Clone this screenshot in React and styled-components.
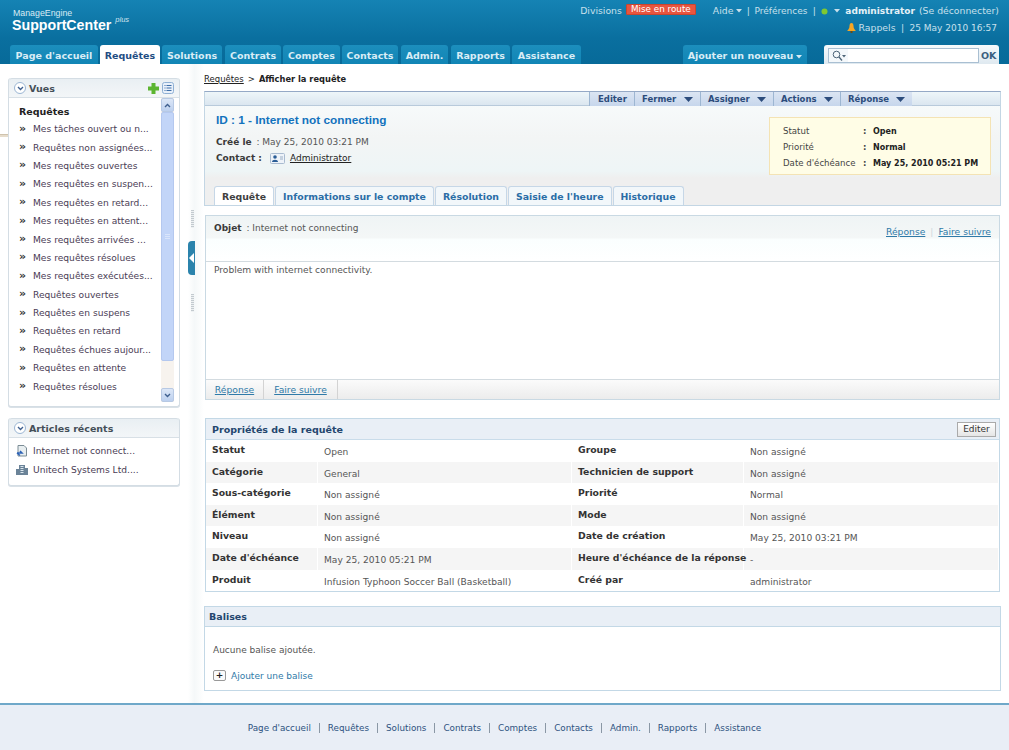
import React from 'react';
import styled, { createGlobalStyle } from 'styled-components';

const Global = createGlobalStyle`
  html, body { margin: 0; padding: 0; background: #fff; }
  body { font-family: "DejaVu Sans", Verdana, sans-serif; font-size: 9px; color: #333; }
  * { box-sizing: border-box; }
`;
const Page = styled.div`width: 1009px; height: 750px; overflow: hidden; display: flex; flex-direction: column; background: #fff;`;
const Header = styled.header`height: 64px; flex: none; background: linear-gradient(#1583b4, #0a6f9f 60%, #076a99); display: flex; flex-direction: column; position: relative;`;
const HeaderTop = styled.div`height: 45px; display: flex; justify-content: space-between; padding: 0 10px 0 12px;`;
const Logo = styled.div`color: #fff; padding-top: 8px; font-family: "Liberation Sans", Arial, sans-serif;`;
const LogoSmall = styled.div`font-size: 8.8px; line-height: 10px; color: #d8ebf4; padding-left: 1px;`;
const LogoBig = styled.div`font-size: 14.2px; line-height: 15px; font-weight: 700; display: flex; gap: 4px;`;
const LogoPlus = styled.span`font-size: 7.5px; font-style: italic; font-weight: 400; line-height: 8px; color: #cfe4ee; margin-top: -2px;`;
const HeaderRight = styled.div`display: flex; flex-direction: column; align-items: flex-end; color: #c8e0ec; font-size: 9.3px; padding-top: 5px; gap: 6px;`;
const HeaderLine = styled.div`display: flex; align-items: center; height: 11px; white-space: nowrap; padding-right: ${p => p.$pr ?? 0}px;`;
const Gap = styled.span`display: inline-block; flex: none; width: ${p => p.$w}px; text-align: center;`;
const Pref = styled.span`font-size: 9px;`;
const DateText = styled.span`font-size: 9px;`;
const Badge = styled.span`background: #e8553f; color: #fff; border: 1px solid #c9452f; font-size: 8.8px; line-height: 9px; height: 11px; width: 70px; text-align: center; margin: -3px 17px 0 4px; border-radius: 1px;`;
const Admin = styled.b`color: #e4f1f7; font-size: 9px; margin-right: 4px;`;
const NavRow = styled.div`height: 19px; display: flex; align-items: flex-end; padding-left: 10px;`;
const NavTab = styled.div`height: 19px; flex: none; width: ${p => p.$w}px; margin-right: ${p => p.$m}px; margin-left: ${p => p.$ml ?? 0}px; border-radius: 3px 3px 0 0; font-size: 9.5px; font-weight: 700; line-height: 21px; text-align: center; white-space: nowrap;
  background: ${p => p.$active ? '#fff' : 'linear-gradient(#1c8ebd, #1185b5)'};
  color: ${p => p.$active ? '#1f4d83' : '#d9edf6'};`;
const SearchBox = styled.div`width: 175px; height: 19px; margin-left: 17px; background: linear-gradient(#f6fafc, #dfe9f0); border-radius: 3px 3px 0 0; display: flex; align-items: center; padding: 2px 2px 0 4px;`;
const SearchIcon = styled.div`width: 20px; height: 15px; background: #f4f8fb; border: 1px solid #a9bfd2; border-right: none; display: flex; align-items: center; justify-content: center;`;
const SearchInput = styled.div`width: 131px; height: 15px; background: #fff; border: 1px solid #a9bfd2; border-left: none;`;
const SearchOk = styled.b`font-size: 9.5px; color: #3a5f80; margin-left: 2px;`;

const Body = styled.div`flex: 1; display: flex; min-height: 0;`;
const Sidebar = styled.aside`width: 188px; flex: none; padding: 14px 0 0 8px; display: flex; flex-direction: column; gap: 11px; position: relative;`;
const EdgeMark = styled.div`position: absolute; left: 0; top: 70px; width: 12px; height: 3px; background: #e6dccb; border-top: 1px solid #cfc3ad;`;
const Panel = styled.section`width: 172px; height: ${p => p.$h}px; background: #fff; border: 1px solid #d4dde4; border-top: none; border-radius: 3px; box-shadow: 0 1px 0 #d9e1e7; display: flex; flex-direction: column; position: relative;`;
const PanelHead = styled.div`height: 20px; flex: none; background: linear-gradient(#e9eff3, #f3f6f8); border-top: 1px solid #d4dde4; border-bottom: 1px solid #d8e0e6; display: flex; align-items: center; padding: 0 5px; gap: 3px; font-weight: 700; font-size: 9.5px; color: #444f58; border-radius: 3px 3px 0 0;`;
const Collapse = styled.span`width: 12px; height: 12px; border-radius: 50%; border: 1px solid #9bb6d4; background: #fff; display: flex; align-items: center; justify-content: center; flex: none;`;
const Spacer = styled.span`flex: 1;`;
const ViewBody = styled.div`flex: 1; display: flex; min-height: 0;`;
const ViewList = styled.div`flex: 1; padding: 4px 0 0 10px;`;
const ViewTitle = styled.div`font-weight: 700; font-size: 9.5px; color: #222; height: 18px; line-height: 20px;`;
const ViewItem = styled.div`height: 18.4px; display: flex; align-items: center; white-space: nowrap; color: #4a3c55; font-size: 9.15px;`;
const Chevrons = styled.span`width: 14px; flex: none; font-size: 11px; font-weight: 700; color: #333; line-height: 9px; margin-top: -2px;`;
const Scroll = styled.div`width: 13px; flex: none; margin: 0 5px 4px 0; display: flex; flex-direction: column; background: #f7f3ee;`;
const ScrollBtn = styled.div`height: 14px; background: linear-gradient(#dce7f7, #bcd0ef); border: 1px solid #b7c9e4; border-radius: 2px; display: flex; align-items: center; justify-content: center; flex: none;`;
const ScrollThumb = styled.div`height: 249px; background: #c2d5f8; border: 1px solid #b4c8ef; border-radius: 2px; flex: none; display: flex; align-items: center; justify-content: center;`;
const ThumbGrip = styled.div`width: 5px; height: 6px; background: repeating-linear-gradient(#d9e5fb 0 1px, #c2d5f8 1px 2px);`;
const RecentItem = styled.div`height: 18.5px; display: flex; align-items: center; gap: 5px; padding-left: 7px; color: #4a3c55; font-size: 9.15px; white-space: nowrap;`;
const RecentList = styled.div`padding-top: 4px;`;

const Splitter = styled.div`width: 16px; flex: none; position: relative; background: linear-gradient(90deg, #fff, #f5f8f9 40%, #fff);`;
const Handle = styled.div`position: absolute; left: 0; top: 177px; width: 7px; height: 34px; background: #2b83ac; border-radius: 4px 0 0 4px; display: flex; align-items: center; justify-content: center;`;
const Grip = styled.div`position: absolute; left: 3px; top: ${p => p.$t}px; width: 3px; height: ${p => p.$h}px; background: repeating-linear-gradient(#c3cacf 0 1px, #eef1f3 1px 2px);`;

const Main = styled.main`flex: 1; padding: 6px 8px 0 0; min-width: 0;`;
const Crumbs = styled.div`height: 17px; font-size: 8.5px; color: #222; display: flex; gap: 4px; align-items: center;`;
const CrumbLink = styled.span`text-decoration: underline;`;
const CrumbNow = styled.b`font-size: 8.3px;`;
const Summary = styled.section`border: 1px solid #c3d6e4; border-top: 1px solid #95a9c6; background: linear-gradient(#f8fcfd, #f3f5f5 40%, #eef5f6 70%, #efefef 76%); height: 115px; margin-top: 4px; position: relative; display: flex; flex-direction: column;`;
const ActionBar = styled.div`height: 14px; flex: none; display: flex; justify-content: flex-end; padding-right: 88px; background: linear-gradient(#eef6f9, #dbe6f0); border-bottom: 1px solid #b8cadb;`;
const Action = styled.div`height: 14px; padding: 0 ${p => p.$arrow ? 7 : 8}px; width: ${p => p.$w}px; background: linear-gradient(#dbe5f3, #c6d6ec); border-left: 1px solid #9db6d2; color: #2c4c7c; font-size: 8.5px; font-weight: 700; display: flex; align-items: center; justify-content: space-between;`;
const SummaryMain = styled.div`flex: 1; padding: 7px 0 0 11px; display: flex; flex-direction: column;`;
const Title = styled.h1`margin: 0; font: 700 11.8px/14px "Liberation Sans", Arial, sans-serif; color: #1272bd;`;
const MetaRow = styled.div`height: 16px; display: flex; align-items: center; font-size: 9px; color: #555; white-space: pre; margin-top: ${p => p.$mt ?? 0}px;`;
const MetaLabel = styled.b`color: #3a3a3a; margin-right: 2px;`;
const ContactIcon = styled.span`margin: 0 5px 0 6px; display: inline-flex;`;
const Underlined = styled.span`text-decoration: underline; color: #222;`;
const InfoBox = styled.div`position: absolute; right: 9px; top: 25px; width: 222px; height: 58px; background: #fffde6; border: 1px solid #f4e3b4; padding: 5px 0 0 13px; display: grid; grid-template-columns: 80px 10px 1fr; grid-auto-rows: 16px; align-items: center; font-size: 8.6px; color: #444;`;
const InfoValue = styled.b`color: #222; font-size: 8px;`;
const TabRow = styled.div`display: flex; gap: 1px; padding-left: 9px; height: 19px; flex: none;`;
const Tab = styled.div`height: 19px; padding: 0 ${p => p.$p}px; border: 1px solid #c6d7e7; border-bottom: none; border-radius: 3px 3px 0 0; display: flex; align-items: center; font-size: 9.35px; font-weight: 700; white-space: nowrap;
  background: ${p => p.$active ? '#fff' : '#f2f7fa'}; color: ${p => p.$active ? '#3f3f3f' : '#2a6da6'};`;

const Message = styled.section`margin: 9px 1px 0 1px; height: 185px; border: 1px solid #c9d9e3; display: flex; flex-direction: column;`;
const MessageHead = styled.div`height: 46px; flex: none; border-bottom: 1px solid #d3dbe0; background: linear-gradient(#eff4f5, #f4f7f7 22px, #fafefe 23px, #fff); display: flex; justify-content: space-between; padding: 7px 8px 0 8px; font-size: 9px; color: #555;`;
const MessageLinks = styled.div`display: flex; align-items: center; height: 11px; margin-top: 3px; gap: 5px; color: #d0d8dc;`;
const LinkText = styled.span`color: #2f7aa8; text-decoration: underline; font-size: 9.2px;`;
const MessageBody = styled.div`flex: 1; padding: 1px 8px; font-size: 9.1px; color: #555; line-height: 14px;`;
const MessageFoot = styled.div`height: 20px; flex: none; border-top: 1px solid #d3dbe0; background: linear-gradient(#fbfbfb, #ececec); display: flex;`;
const FootLink = styled.div`border-right: 1px solid #d3d3d3; display: flex; align-items: center; width: ${p => p.$w}px; justify-content: center;`;

const Props = styled.section`margin: 18px 1px 0 1px; border: 1px solid #c3d8e6;`;
const PropsHead = styled.div`height: 21px; background: #e9eff6; border-bottom: 1px solid #c9dcea; display: flex; align-items: center; justify-content: space-between; padding: 0 3px 0 6px; font-weight: 700; font-size: 9.5px; color: #24466e;`;
const EditBtn = styled.div`width: 39px; height: 15px; background: linear-gradient(#fff, #e5e5e5); border: 1px solid #aaa; font-size: 9px; font-weight: 400; color: #333; display: flex; align-items: center; justify-content: center;`;
const PropsRow = styled.div`height: 21.6px; display: grid; grid-template-columns: 112px 254px 172px 1fr; background: ${p => p.$odd ? '#f5f5f5' : '#fff'}; font-size: 9.1px; color: #555;`;
const PropLabel = styled.div`font-weight: 700; font-size: 9.3px; color: #333; padding: 4px 0 0 6px; white-space: nowrap; border-right: 1px solid #fff;`;
const PropValue = styled.div`padding: 7px 0 0 6px; white-space: nowrap; border-right: 1px solid #fff;`;

const Tags = styled.section`margin-top: 14px; height: 85px; border: 1px solid #c3d8e6;`;
const TagsHead = styled.div`height: 20px; background: #e9eff6; border-bottom: 1px solid #c3d8e6; display: flex; align-items: center; padding-left: 4px; font-weight: 700; font-size: 9.5px; color: #24466e;`;
const TagsText = styled.div`padding: 18px 0 0 8px; font-size: 9px; color: #555; height: 43px;`;
const AddTag = styled.div`display: flex; align-items: center; gap: 5px; padding-left: 8px; font-size: 9px; color: #2f7aa8;`;
const PlusBox = styled.span`width: 13px; height: 11px; border: 1px solid #999; border-radius: 2px; background: #fafafa; color: #222; font-size: 9px; line-height: 8px; text-align: center; font-weight: 700;`;

const Footer = styled.footer`height: 47px; flex: none; border-top: 2px solid #6fa8c9; background: #e9eef6; display: flex; justify-content: center; align-items: center; padding-top: 1px; font-size: 8.8px; color: #2d5280;`;
const FootItem = styled.span`padding: 0 8px; border-left: ${p => p.$first ? 'none' : '1px solid #8a97a5'}; line-height: 10px; white-space: nowrap;`;

const Caret = ({ color = '#fff' }) => <svg width="6" height="4" viewBox="0 0 6 4" style={{ marginLeft: 3, flex: 'none' }}><path d="M0 0h6L3 3.5z" fill={color} /></svg>;
const Down = () => <svg width="9" height="5" viewBox="0 0 9 5"><path d="M0 0h9L4.5 5z" fill="#2c4c7c" /></svg>;
const Chev = ({ up, color = '#3e5f8e' }) => <svg width="7" height="5" viewBox="0 0 7 5"><path d={up ? 'M1 4l2.5-2.5L6 4' : 'M1 1l2.5 2.5L6 1'} fill="none" stroke={color} strokeWidth="1.4" /></svg>;

const navTabs = [['Page d\'accueil', 88, 2], ['Requêtes', 60, 2, true], ['Solutions', 60, 3], ['Contrats', 56, 2], ['Comptes', 57, 2], ['Contacts', 56, 3], ['Admin.', 47, 3], ['Rapports', 59, 2], ['Assistance', 69, 0]];
const views = ['Mes tâches ouvert ou n...', 'Requêtes non assignées...', 'Mes requêtes ouvertes', 'Mes requêtes en suspen...', 'Mes requêtes en retard...', 'Mes requêtes en attent...', 'Mes requêtes arrivées ...', 'Mes requêtes résolues', 'Mes requêtes exécutées...', 'Requêtes ouvertes', 'Requêtes en suspens', 'Requêtes en retard', 'Requêtes échues aujour...', 'Requêtes en attente', 'Requêtes résolues'];
const props = [
  ['Statut', 'Open', 'Groupe', 'Non assigné'],
  ['Catégorie', 'General', 'Technicien de support', 'Non assigné'],
  ['Sous-catégorie', 'Non assigné', 'Priorité', 'Normal'],
  ['Élément', 'Non assigné', 'Mode', 'Non assigné'],
  ['Niveau', 'Non assigné', 'Date de création', 'May 25, 2010 03:21 PM'],
  ['Date d\'échéance', 'May 25, 2010 05:21 PM', 'Heure d\'échéance de la réponse', '-'],
  ['Produit', 'Infusion Typhoon Soccer Ball (Basketball)', 'Créé par', 'administrator'],
];
const footerLinks = ['Page d\'accueil', 'Requêtes', 'Solutions', 'Contrats', 'Comptes', 'Contacts', 'Admin.', 'Rapports', 'Assistance'];

export default function App() {
  return (
    <Page>
      <Global />
      <Header>
        <HeaderTop>
          <Logo>
            <LogoSmall>ManageEngine</LogoSmall>
            <LogoBig>SupportCenter<LogoPlus>plus</LogoPlus></LogoBig>
          </Logo>
          <HeaderRight>
            <HeaderLine>
              Divisions<Badge>Mise en route</Badge>Aide<Caret color="#c8e0ec" />
              <Gap $w={12}>|</Gap><Pref>Préférences</Pref><Gap $w={14}>|</Gap>
              <svg width="7" height="8" viewBox="0 0 7 8"><circle cx="3.5" cy="4.5" r="3" fill="#7fc832" /></svg>
              <Gap $w={3} /><Caret color="#c8e0ec" /><Gap $w={5} /><Admin>administrator</Admin>(Se déconnecter)
            </HeaderLine>
            <HeaderLine $pr={2}>
              <svg width="9" height="10" viewBox="0 0 9 10" style={{ marginRight: 3 }}><path d="M4.5 0C3 0 2.5 1.5 2.5 3 2.5 5.5 1 7 0 8h9C8 7 6.500 5.500 6.500 3 6.500 1.500 6 0 4.500 0z" fill="#f5a623" /><rect x="3.500" y="8" width="2" height="2" fill="#6b4a12" /></svg>
              Rappels<Gap $w={14}>|</Gap><DateText>25 May 2010 16:57</DateText>
            </HeaderLine>
          </HeaderRight>
        </HeaderTop>
        <NavRow>
          {navTabs.map(([t, w, m, a]) => <NavTab key={t} $w={w} $m={m} $active={a}>{t}</NavTab>)}
          <NavTab $w={124} $m={0} $ml={102}>Ajouter un nouveau<Caret color="#d9edf6" /></NavTab>
          <SearchBox>
            <SearchIcon><svg width="14" height="11" viewBox="0 0 14 11"><circle cx="4.500" cy="4.500" r="3.300" fill="none" stroke="#4d6478" /><path d="M7 7l3 3.500" stroke="#4d6478" strokeWidth="1.300" /><path d="M10 5h4l-2 2.500z" fill="#4d6478" /></svg></SearchIcon>
            <SearchInput />
            <SearchOk>OK</SearchOk>
          </SearchBox>
        </NavRow>
      </Header>
      <Body>
        <Sidebar>
          <EdgeMark />
          <Panel $h={329}>
            <PanelHead>
              <Collapse><Chev /></Collapse>Vues<Spacer />
              <svg width="11" height="11" viewBox="0 0 11 11"><path d="M3.500 0h4v3.500H11v4H7.500V11h-4V7.500H0v-4h3.500z" fill="#5cb531" /></svg>
              <svg width="12" height="12" viewBox="0 0 12 12"><rect x=".5" y=".5" width="11" height="11" rx="2" fill="#e8f0fa" stroke="#8fb0d4" /><path d="M4.500 3.500h5M4.500 6h5M4.500 8.500h5M2.500 3.500h1M2.500 6h1M2.500 8.500h1" stroke="#3e6ea8" /></svg>
            </PanelHead>
            <ViewBody>
              <ViewList>
                <ViewTitle>Requêtes</ViewTitle>
                {views.map(v => <ViewItem key={v}><Chevrons>»</Chevrons>{v}</ViewItem>)}
              </ViewList>
              <Scroll>
                <ScrollBtn><Chev up /></ScrollBtn>
                <ScrollThumb><ThumbGrip /></ScrollThumb>
                <Spacer />
                <ScrollBtn><Chev /></ScrollBtn>
              </Scroll>
            </ViewBody>
          </Panel>
          <Panel $h={68}>
            <PanelHead><Collapse><Chev /></Collapse>Articles récents</PanelHead>
            <RecentList>
              <RecentItem>
                <svg width="12" height="12" viewBox="0 0 12 12"><path d="M2 .5h6l2.500 2.500v8H2z" fill="#e8eef0" stroke="#7b8c95" /><path d="M1 8h5l-2-2M1 8l3 2.500" stroke="#2d62b5" strokeWidth="1.500" fill="none" /></svg>
                Internet not connect...
              </RecentItem>
              <RecentItem>
                <svg width="12" height="12" viewBox="0 0 12 12"><path d="M3 1h6v10H3zM0 5h3v6H0zM9 4h3v7H9z" fill="#6b8398" /><path d="M4.500 2.500h3M4.500 4.500h3M4.500 6.500h3M4.500 8.500h3" stroke="#dbe6ee" /></svg>
                Unitech Systems Ltd....
              </RecentItem>
            </RecentList>
          </Panel>
        </Sidebar>
        <Splitter>
          <Grip $t={146} $h={18} />
          <Handle><svg width="5" height="10" viewBox="0 0 5 10"><path d="M5 0v10L0 5z" fill="#fff" /></svg></Handle>
          <Grip $t={230} $h={18} />
        </Splitter>
        <Main>
          <Crumbs><CrumbLink>Requêtes</CrumbLink> &gt; <CrumbNow>Afficher la requête</CrumbNow></Crumbs>
          <Summary>
            <ActionBar>
              <Action $w={45}>Editer</Action>
              <Action $w={66} $arrow>Fermer<Down /></Action>
              <Action $w={73} $arrow>Assigner<Down /></Action>
              <Action $w={67} $arrow>Actions<Down /></Action>
              <Action $w={72} $arrow>Réponse<Down /></Action>
            </ActionBar>
            <SummaryMain>
              <Title>ID : 1 - Internet not connecting</Title>
              <MetaRow $mt={7}><MetaLabel>Créé le</MetaLabel> : May 25, 2010 03:21 PM</MetaRow>
              <MetaRow><MetaLabel>Contact :</MetaLabel>
                <ContactIcon><svg width="15" height="11" viewBox="0 0 15 11"><rect x=".5" y=".5" width="14" height="10" rx="1" fill="#eef3f9" stroke="#a9bbd0" /><circle cx="5" cy="4" r="1.800" fill="#2a5d96" /><path d="M2 9c0-3 6-3 6 0z" fill="#2a5d96" /><path d="M10 4h3M10 6h3" stroke="#9aaec4" /></svg></ContactIcon>
                <Underlined>Administrator</Underlined></MetaRow>
            </SummaryMain>
            <InfoBox>
              <span>Statut</span><b>:</b><InfoValue>Open</InfoValue>
              <span>Priorité</span><b>:</b><InfoValue>Normal</InfoValue>
              <span>Date d'échéance</span><b>:</b><InfoValue>May 25, 2010 05:21 PM</InfoValue>
            </InfoBox>
            <TabRow>
              <Tab $active $p={7}>Requête</Tab>
              <Tab $p={7}>Informations sur le compte</Tab>
              <Tab $p={7}>Résolution</Tab>
              <Tab $p={7}>Saisie de l'heure</Tab>
              <Tab $p={7}>Historique</Tab>
            </TabRow>
          </Summary>
          <Message>
            <MessageHead>
              <div><MetaLabel>Objet</MetaLabel> : Internet not connecting</div>
              <MessageLinks><LinkText>Réponse</LinkText>|<LinkText>Faire suivre</LinkText></MessageLinks>
            </MessageHead>
            <MessageBody>Problem with internet connectivity.</MessageBody>
            <MessageFoot>
              <FootLink $w={58}><LinkText>Réponse</LinkText></FootLink>
              <FootLink $w={74}><LinkText>Faire suivre</LinkText></FootLink>
            </MessageFoot>
          </Message>
          <Props>
            <PropsHead>Propriétés de la requête<EditBtn>Editer</EditBtn></PropsHead>
            {props.map((r, i) => (
              <PropsRow key={r[0]} $odd={i % 2 === 1}>
                <PropLabel>{r[0]}</PropLabel><PropValue>{r[1]}</PropValue>
                <PropLabel>{r[2]}</PropLabel><PropValue>{r[3]}</PropValue>
              </PropsRow>
            ))}
          </Props>
          <Tags>
            <TagsHead>Balises</TagsHead>
            <TagsText>Aucune balise ajoutée.</TagsText>
            <AddTag><PlusBox>+</PlusBox>Ajouter une balise</AddTag>
          </Tags>
        </Main>
      </Body>
      <Footer>
        {footerLinks.map((l, i) => <FootItem key={l} $first={i === 0}>{l}</FootItem>)}
      </Footer>
    </Page>
  );
}
